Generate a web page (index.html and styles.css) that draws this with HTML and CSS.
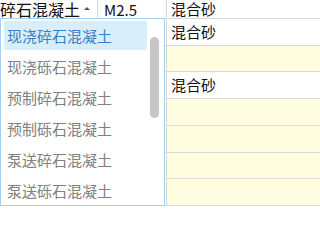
FILE: index.html
```html
<!DOCTYPE html>
<html lang="zh-CN">
<head>
<meta charset="utf-8">
<title>Dropdown</title>
<link rel="stylesheet" href="styles.css">
</head>
<body>
<div class="sheet">
  <div class="row first">
    <div class="cell c1 editing"><span class="value">碎石混凝土</span><span class="caret"></span></div>
    <div class="cell c2 latin">M2.5</div>
    <div class="cell c3">混合砂</div>
  </div>
  <div class="row"><div class="cell c1"></div><div class="cell c2"></div><div class="cell c3">混合砂</div></div>
  <div class="row yellow"><div class="cell c1"></div><div class="cell c2"></div><div class="cell c3"></div></div>
  <div class="row"><div class="cell c1"></div><div class="cell c2"></div><div class="cell c3">混合砂</div></div>
  <div class="row yellow"><div class="cell c1"></div><div class="cell c2"></div><div class="cell c3"></div></div>
  <div class="row yellow"><div class="cell c1"></div><div class="cell c2"></div><div class="cell c3"></div></div>
  <div class="row yellow"><div class="cell c1"></div><div class="cell c2"></div><div class="cell c3"></div></div>
  <div class="row yellow"><div class="cell c1"></div><div class="cell c2"></div><div class="cell c3"></div></div>
</div>

<div class="dropdown">
  <ul class="list">
    <li class="item active">现浇碎石混凝土</li>
    <li class="item">现浇砾石混凝土</li>
    <li class="item">预制碎石混凝土</li>
    <li class="item">预制砾石混凝土</li>
    <li class="item">泵送碎石混凝土</li>
    <li class="item">泵送砾石混凝土</li>
  </ul>
  <div class="track"><div class="thumb"></div></div>
</div>
</body>
</html>
```

FILE: styles.css
```css
html, body {
  margin: 0;
  padding: 0;
  background: #ffffff;
  overflow: hidden;
}

body {
  font-family: "Noto Sans CJK SC", "Noto Sans", sans-serif;
  font-size: 15px;
  color: #111111;
}

.sheet {
  display: flex;
  flex-direction: column;
}

.row {
  display: grid;
  grid-template-columns: 98px 69px 1fr;
  height: 26.71px;
  background: #ffffff;
}

.row.first {
  height: 19px;
}

.row.yellow {
  background: #fffde0;
}

.cell {
  box-sizing: border-box;
  border-right: 1px solid #d9d9d9;
  border-bottom: 1px solid #d9d9d9;
  display: flex;
  align-items: center;
  white-space: nowrap;
  overflow: hidden;
  line-height: 16px;
}

.row.first .cell {
  padding-bottom: 1px;
}

.c1 {
  padding-left: 0;
}

.editing .value {
  font-size: 16px;
}

.caret {
  width: 0;
  height: 0;
  margin-left: 4px;
  margin-bottom: 1px;
  border-left: 3px solid transparent;
  border-right: 3px solid transparent;
  border-bottom: 3px solid #555555;
}

.c2 {
  padding-left: 6px;
}

.latin {
  padding-top: 2px;
}

.c3 {
  padding-left: 4px;
  border-right: none;
}

.dropdown {
  position: absolute;
  left: 0;
  top: 18px;
  width: 165px;
  height: 188px;
  box-sizing: border-box;
  border: 1px solid #a3d1ef;
  background: #ffffff;
  display: flex;
  overflow: hidden;
}

.list {
  list-style: none;
  margin: 0;
  padding: 2px 0 0 3px;
  width: 146px;
  box-sizing: border-box;
  display: flex;
  flex-direction: column;
  gap: 2px;
}

.item {
  height: 29px;
  line-height: 29px;
  padding-left: 3px;
  color: #808080;
  white-space: nowrap;
  flex: none;
}

.item.active {
  background: #d8eefa;
  color: #3b80c3;
}

.track {
  flex: 1;
  padding-left: 3px;
}

.thumb {
  width: 9px;
  height: 81px;
  margin-top: 18px;
  border-radius: 5px;
  background: #c6c6c6;
}
```
